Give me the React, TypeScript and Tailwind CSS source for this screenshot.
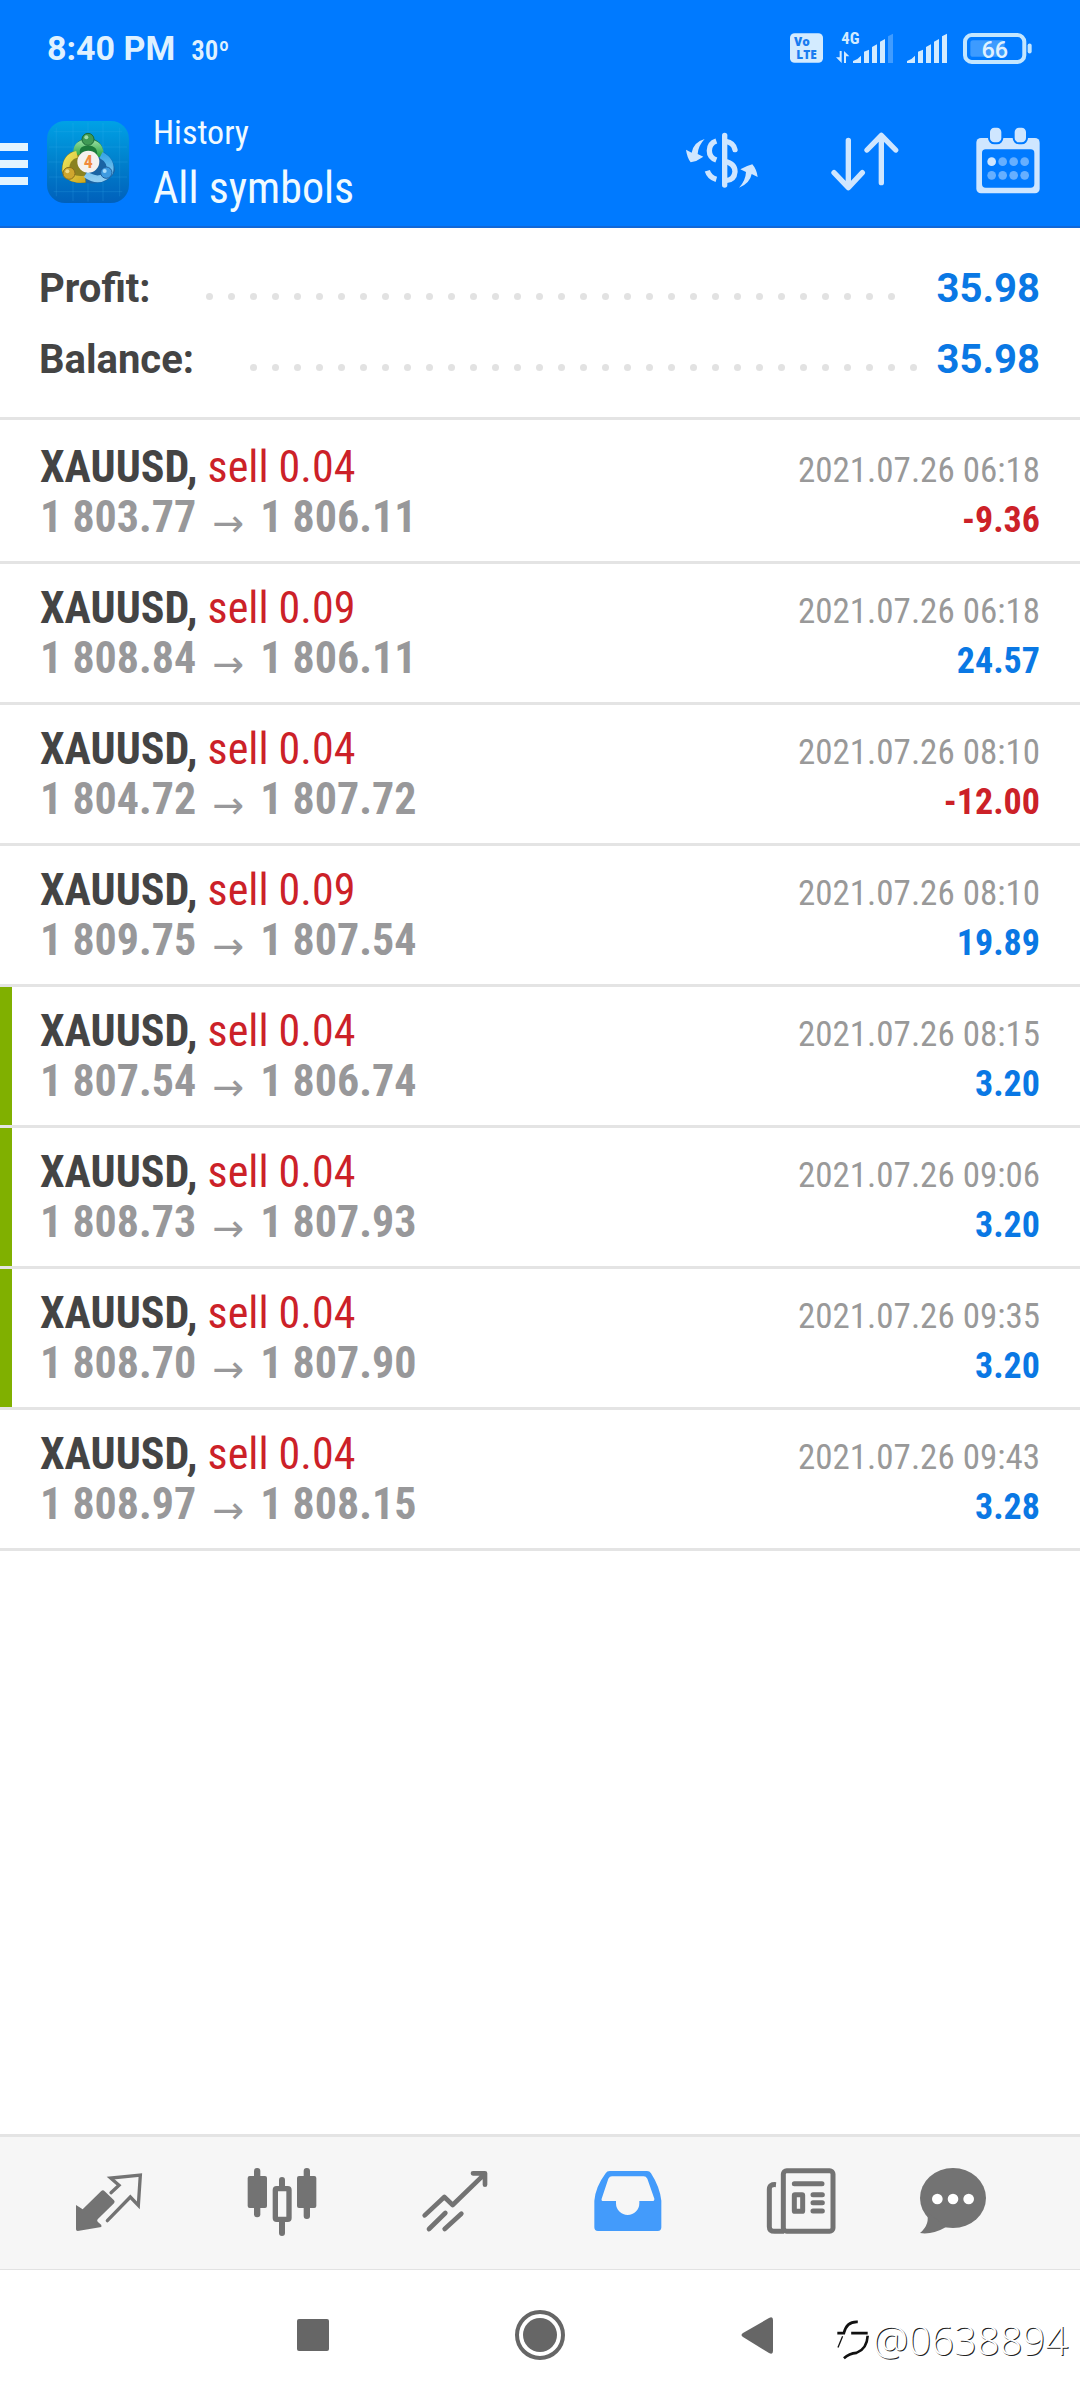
import type { ReactNode } from 'react'

type Deal = {
  lot: string
  open: string
  close: string
  time: string
  profit: string
  marked?: boolean
}

const deals: Deal[] = [
  { lot: '0.04', open: '1 803.77', close: '1 806.11', time: '2021.07.26 06:18', profit: '-9.36' },
  { lot: '0.09', open: '1 808.84', close: '1 806.11', time: '2021.07.26 06:18', profit: '24.57' },
  { lot: '0.04', open: '1 804.72', close: '1 807.72', time: '2021.07.26 08:10', profit: '-12.00' },
  { lot: '0.09', open: '1 809.75', close: '1 807.54', time: '2021.07.26 08:10', profit: '19.89' },
  { lot: '0.04', open: '1 807.54', close: '1 806.74', time: '2021.07.26 08:15', profit: '3.20', marked: true },
  { lot: '0.04', open: '1 808.73', close: '1 807.93', time: '2021.07.26 09:06', profit: '3.20', marked: true },
  { lot: '0.04', open: '1 808.70', close: '1 807.90', time: '2021.07.26 09:35', profit: '3.20', marked: true },
  { lot: '0.04', open: '1 808.97', close: '1 808.15', time: '2021.07.26 09:43', profit: '3.28' },
]

function SignalIcon({ weak }: { weak?: boolean }) {
  return (
    <svg viewBox="0 0 120 90" className="h-[30px] w-10 fill-[#d3ebff]" aria-hidden="true">
      <path d="M0 90V84Q14 80 24 68V90Z" />
      <path d="M33 90V56L48 50V90Z" />
      <path d="M57 90V42L72 34V90Z" />
      <path d="M81 90V26L96 18V90Z" />
      <path d="M105 90V10L120 2V90Z" opacity={weak ? 0.3 : 1} />
    </svg>
  )
}

function StatusBar() {
  return (
    <div className="flex h-24 items-center justify-between pr-12 pl-[47px] text-[#dff1ff]">
      <div className="flex items-baseline gap-4">
        <span className="text-[34px] leading-none font-bold">8:40 PM</span>
        <span className="font-['Roboto_Condensed'] text-[27px] leading-none font-semibold">30º</span>
      </div>
      <div className="flex items-center">
        <svg viewBox="0 0 100 90" className="mr-[13px] h-[30px] w-[33px]" fontSize="36" fontWeight="800" fontFamily="Open Sans, sans-serif" aria-hidden="true">
          <rect width="100" height="90" rx="14" fill="#d3ebff" />
          <text x="12" y="39" fill="#1a7cf0">Vo</text>
          <text x="50" y="79" textAnchor="middle" fill="#1a7cf0">LTE</text>
        </svg>
        <svg viewBox="0 0 51 99" className="mb-[3px] h-[33px] w-[17px] overflow-visible fill-[#d3ebff]" aria-hidden="true">
          <text x="16" y="42" fontSize="50" fontWeight="700" fontFamily="Roboto Condensed, Roboto, sans-serif">4G</text>
          <path d="M11 63H17V99L0 82H11Z" />
          <path d="M24 99V63L40 79H30V99Z" />
        </svg>
        <SignalIcon weak />
        <span className="w-[14px]" />
        <SignalIcon />
        <svg viewBox="0 0 206 92" className="ml-4 h-[31px] w-[69px]" aria-hidden="true">
          <rect x="22" y="21" width="102" height="50" rx="8" fill="#3d9bff" />
          <rect x="6" y="6" width="177" height="80" rx="20" fill="none" stroke="#c3e6ff" strokeWidth="12" />
          <rect x="193" y="31" width="12" height="30" rx="6" fill="#c3e6ff" />
          <text x="95" y="73" textAnchor="middle" fontSize="70" fontWeight="500" fontFamily="Roboto, sans-serif" fill="#dff1ff">66</text>
        </svg>
      </div>
    </div>
  )
}

function AppLogo() {
  return (
    <svg viewBox="0 0 246 246" className="mb-1 ml-[19px] size-[82px]" aria-hidden="true">
      <defs>
        <linearGradient id="tile" x1="0" y1="0" x2="0" y2="1">
          <stop offset="0" stopColor="#00a2e6" />
          <stop offset="0.5" stopColor="#0080cc" />
          <stop offset="1" stopColor="#0060bb" />
        </linearGradient>
        <linearGradient id="green" x1="0" y1="0" x2="0" y2="1">
          <stop offset="0" stopColor="#8ad695" />
          <stop offset="1" stopColor="#25a33d" />
        </linearGradient>
        <linearGradient id="yellow" x1="0" y1="0" x2="1" y2="1">
          <stop offset="0" stopColor="#ece35a" />
          <stop offset="1" stopColor="#cfaa24" />
        </linearGradient>
        <linearGradient id="blue" x1="0" y1="0" x2="0" y2="1">
          <stop offset="0" stopColor="#3aa7e6" />
          <stop offset="1" stopColor="#8fcdf2" />
        </linearGradient>
      </defs>
      <rect width="246" height="246" rx="54" fill="url(#tile)" />
      <path
        d="M28 20V226M78 6V240M123 4V242M168 6V240M218 20V226M20 32H226M6 78H240M4 123H242M6 168H240M20 212H226"
        stroke="#3fb4ee"
        strokeOpacity="0.3"
        strokeWidth="2"
      />
      <path d="M88 118Q72 66 108 54H140Q178 70 166 120Z" fill="#1c7a3c" />
      <path d="M90 88Q46 96 44 150Q56 190 116 186L128 140Z" fill="#8a8220" />
      <path d="M160 90Q200 104 204 150Q184 194 116 186L116 146Z" fill="#1a64a4" />
      <path d="M90 102Q82 66 123 64Q164 66 160 108" fill="none" stroke="url(#green)" strokeWidth="19" />
      <path d="M90 100Q56 108 56 148Q66 180 114 174" fill="none" stroke="url(#yellow)" strokeWidth="20" />
      <path d="M162 102Q196 120 188 154Q158 190 116 160" fill="none" stroke="url(#blue)" strokeWidth="20" />
      <circle cx="123" cy="55" r="18" fill="#3f9a55" stroke="#1c6a38" strokeWidth="3" />
      <circle cx="66" cy="157" r="18" fill="#cfa62e" stroke="#8a6f1b" strokeWidth="3" />
      <circle cx="178" cy="155" r="17" fill="#3f9be0" stroke="#1d5f9e" strokeWidth="3" />
      <circle cx="118" cy="49" r="6" fill="#9fdcaa" />
      <circle cx="61" cy="151" r="6" fill="#f0da85" />
      <circle cx="173" cy="150" r="6" fill="#a9dcfa" />
      <circle cx="124" cy="122" r="33" fill="#f4f1ee" />
      <text x="124" y="141" textAnchor="middle" fontSize="54" fontWeight="700" fontFamily="Roboto Condensed, Roboto, sans-serif" fill="#f08a3c">4</text>
    </svg>
  )
}

function ToolButton({ label, viewBox, children }: { label: string; viewBox: string; children: ReactNode }) {
  return (
    <button type="button" aria-label={label} className="size-20">
      <svg viewBox={viewBox} className="size-20" aria-hidden="true">
        {children}
      </svg>
    </button>
  )
}

function Header() {
  return (
    <header className="border-b-2 border-[#1168d8] bg-[#007aff]">
      <StatusBar />
      <div className="flex items-center pt-3 pr-8 pb-[6px]">
        <button type="button" aria-label="Menu" className="flex w-7 flex-col gap-[9px]">
          <span className="h-2 bg-[#e2f4ff]" />
          <span className="h-2 bg-[#e2f4ff]" />
          <span className="h-2 bg-[#e2f4ff]" />
        </button>
        <AppLogo />
        <div className="ml-6 flex-1 font-['Roboto_Condensed'] text-[#f0faff]">
          <p className="text-[34px] leading-[48px]">History</p>
          <h1 className="text-[44px] leading-[64px]">All symbols</h1>
        </div>
        <div className="flex gap-[63px]">
          <ToolButton label="Symbols" viewBox="37 312 240 240">
            <g fill="none" stroke="#cfe6ff" strokeWidth="16">
              <path d="M165 346V495" strokeLinecap="round" />
              <path d="M168 364Q192 368 196 389" strokeLinecap="round" />
              <path d="M140 363Q119 370 119 392Q119 412 140 420" />
              <path d="M165 424Q196 430 196 455Q194 480 168 482" />
              <path d="M113 452Q119 472 140 478" strokeLinecap="butt" />
            </g>
            <g fill="#cfe6ff">
              <path d="M105 357Q72 366 66 398L49 389Q52 412 63 427Q82 424 101 410L84 402Q86 376 105 357Z" />
              <path d="M208 503Q241 490 246 462L264 471Q261 448 248 433Q229 438 212 448L229 456Q228 482 208 503Z" />
            </g>
          </ToolButton>
          <ToolButton label="Sort" viewBox="466 312 240 240">
            <path
              d="M536 361V500M493 458L536 503L578 458M635 488V348M592 390L635 346L678 390"
              fill="none"
              stroke="#cfe6ff"
              strokeWidth="16"
              strokeLinecap="round"
              strokeLinejoin="round"
            />
          </ToolButton>
          <ToolButton label="Period" viewBox="895 312 240 240">
            <rect x="920" y="354" width="190" height="166" rx="14" fill="#cfe6ff" />
            <rect x="937" y="388" width="157" height="115" rx="11" fill="#007aff" />
            <rect x="958" y="320" width="40" height="50" rx="16" fill="#cfe6ff" stroke="#007aff" strokeWidth="6" />
            <rect x="1032" y="320" width="40" height="50" rx="16" fill="#cfe6ff" stroke="#007aff" strokeWidth="6" />
            {[425, 466].map((cy) =>
              [966, 999, 1032, 1065].map((cx) => (
                <circle key={`${cx}-${cy}`} cx={cx} cy={cy} r="13" fill={cx === 966 && cy === 425 ? '#cfe6ff' : '#66afff'} />
              )),
            )}
          </ToolButton>
        </div>
      </div>
    </header>
  )
}

// Dots that do not fit wrap onto a second line, which is clipped
function DotLeader() {
  return (
    <div className="mt-4 mr-2 ml-12 flex h-[7px] flex-1 flex-wrap overflow-hidden" aria-hidden="true">
      {Array.from({ length: 32 }, (_, i) => (
        <span key={i} className="flex w-[22px] justify-center">
          <span className="size-[7px] rounded-full bg-[#e2e2e2]" />
        </span>
      ))}
    </div>
  )
}

function SummaryLine({ label, value }: { label: string; value: string }) {
  return (
    <div className="flex items-center text-[40px] leading-[71px] font-bold">
      <dt className="text-[#444444]">{label}</dt>
      <DotLeader />
      <dd className="text-[#0a78e4]">{value}</dd>
    </div>
  )
}

function DealRow({ deal }: { deal: Deal }) {
  const loss = deal.profit.startsWith('-')
  return (
    <li className="flex border-b-[3px] border-[#e4e4e4]">
      <span className={deal.marked ? 'w-3 bg-[#80b000]' : 'w-3'} />
      <div className="flex-1 py-[19px] pr-10 pl-7 font-['Roboto_Condensed']">
        <div className="flex items-baseline justify-between leading-[50px]">
          <p className="text-[44px] text-[#cc2128]">
            <span className="font-bold text-[#444444]">XAUUSD,</span> sell {deal.lot}
          </p>
          <time className="text-[35px] leading-none text-[#999999]">{deal.time}</time>
        </div>
        <div className="flex items-baseline justify-between leading-[50px] font-bold">
          <p className="flex items-baseline text-[44px] text-[#98989a]">
            {deal.open}
            <span className="mx-4 self-end font-['DejaVu_Sans'] text-[38px] leading-none font-normal">→</span>
            {deal.close}
          </p>
          <p className={loss ? 'text-[36px] leading-none text-[#cc2128]' : 'text-[36px] leading-none text-[#0a78e4]'}>
            {deal.profit}
          </p>
        </div>
      </div>
    </li>
  )
}

function NavItem({ label, viewBox, active, children }: { label: string; viewBox: string; active?: boolean; children: ReactNode }) {
  return (
    <button
      type="button"
      aria-label={label}
      aria-current={active ? 'page' : undefined}
      className={active ? 'flex justify-center text-[#439bfb]' : 'flex justify-center text-[#737373]'}
    >
      <svg viewBox={viewBox} className="size-[72px]" fill="currentColor" aria-hidden="true">
        {children}
      </svg>
    </button>
  )
}

function TabBar() {
  return (
    <nav className="grid grid-cols-[173fr_173fr_173fr_173fr_173fr_132fr] border-t-[3px] border-b border-t-[#e4e4e4] border-b-[#e2e2e2] bg-[#f6f6f6] pt-[29px] pr-[61px] pb-[31px] pl-[22px]">
      <NavItem label="Quotes" viewBox="38 48 216 216">
        <path d="M47 165L67 178L122 124Q128 118 133 124L161 151Q165 156 161 160L112 208Q109 212 112 215L123 225V231L52 243Q47 243 47 238Z" />
        <path d="M152 128L176 106L151 84L240 75L234 166L210 141L141 212" fill="none" stroke="currentColor" strokeWidth="10" strokeLinecap="round" />
      </NavItem>
      <NavItem label="Charts" viewBox="555 48 216 216">
        <rect x="560" y="78" width="58" height="96" rx="6" />
        <rect x="579" y="54" width="19" height="148" rx="9" />
        <rect x="708" y="78" width="58" height="96" rx="6" />
        <rect x="728" y="54" width="19" height="153" rx="9" />
        <rect x="643" y="116" width="41" height="92" rx="4" fill="none" stroke="currentColor" strokeWidth="16" />
        <path d="M654 112V90A9 9 0 0 1 672 90V112ZM654 212V249A9 9 0 0 0 672 249V212Z" />
      </NavItem>
      <NavItem label="Trade" viewBox="1075 48 216 216">
        <path
          d="M1092 196L1151 141L1176 165L1270 74M1237 70H1273V104M1105 237L1154 189M1152 237L1202 191"
          fill="none"
          stroke="currentColor"
          strokeWidth="14"
          strokeLinecap="round"
          strokeLinejoin="round"
        />
      </NavItem>
      <NavItem label="History" viewBox="35 48 216 216" active>
        <path
          fillRule="evenodd"
          d="M76 70Q80 63 88 63H200Q208 63 212 70Q238 110 243 152V232Q243 243 232 243H53Q42 243 42 232V152Q46 110 76 70ZM95 79Q88 79 84 86L64 146Q62 153 69 153H107V160A35 35 0 0 0 177 160V153H216Q223 153 222 146L201 86Q197 79 190 79Z"
        />
      </NavItem>
      <NavItem label="News" viewBox="555 48 216 216">
        <g fill="none" stroke="currentColor" strokeWidth="15" strokeLinecap="round">
          <rect x="610" y="62" width="149" height="182" rx="10" />
          <path d="M588 104Q568 102 568 118V230Q568 244 584 244H612" strokeLinecap="butt" />
          <path d="M643 101H726M699 134H727M699 158H727M699 183H727" />
          <rect x="643" y="134" width="25" height="50" rx="2" />
        </g>
      </NavItem>
      <NavItem label="Messages" viewBox="1011 48 216 216">
        <ellipse cx="1119" cy="144" rx="99" ry="90" />
        <path d="M1040 186Q1052 222 1020 249Q1056 255 1100 230Z" />
        <g fill="#ffffff">
          <circle cx="1072" cy="147" r="16" />
          <circle cx="1119" cy="147" r="16" />
          <circle cx="1166" cy="147" r="16" />
        </g>
      </NavItem>
    </nav>
  )
}

function SystemBar() {
  return (
    <div className="relative flex h-[130px] items-center justify-center gap-[162px] bg-white text-[#666666]">
      <button type="button" aria-label="Recent apps">
        <svg viewBox="0 0 60 60" className="size-[60px]" fill="currentColor" aria-hidden="true">
          <rect x="9" y="14" width="32" height="32" rx="2" />
        </svg>
      </button>
      <button type="button" aria-label="Home">
        <svg viewBox="0 0 60 60" className="size-[60px]" fill="currentColor" aria-hidden="true">
          <circle cx="30" cy="30" r="17" />
          <circle cx="30" cy="30" r="23" fill="none" stroke="currentColor" strokeWidth="4" />
        </svg>
      </button>
      <button type="button" aria-label="Back">
        <svg viewBox="0 0 60 60" className="size-[60px]" fill="currentColor" aria-hidden="true">
          <path d="M11 28L37 13Q41 11 41 15V46Q41 50 37 48L11 32Q8 30 11 28Z" />
        </svg>
      </button>
      <div className="absolute right-3 bottom-[38px] flex items-center gap-1">
        <svg viewBox="0 0 100 126" className="h-[42px] w-[33px]" fill="none" stroke="#111111" strokeWidth="8" aria-hidden="true">
          <path d="M66 8Q32 6 24 42H4M46 42H96M96 50Q94 90 62 102Q40 104 24 118" />
          <path d="M20 52L6 86" strokeWidth="4" />
        </svg>
        <span className="font-['Open_Sans'] text-[40px] leading-[44px] font-light text-white [text-shadow:1px_1px_0_#222222]">
          @0638894
        </span>
      </div>
    </div>
  )
}

export default function App() {
  return (
    <div className="flex min-h-screen flex-col bg-white font-['Roboto']">
      <Header />

      <main className="flex-1">
        <dl className="border-b-[3px] border-[#e4e4e4] pt-[25px] pr-10 pb-[22px] pl-[39px]">
          <SummaryLine label="Profit:" value="35.98" />
          <SummaryLine label="Balance:" value="35.98" />
        </dl>
        <ul className="pt-[3px]">
          {deals.map((deal, i) => (
            <DealRow key={i} deal={deal} />
          ))}
        </ul>
      </main>

      <TabBar />
      <SystemBar />
    </div>
  )
}
